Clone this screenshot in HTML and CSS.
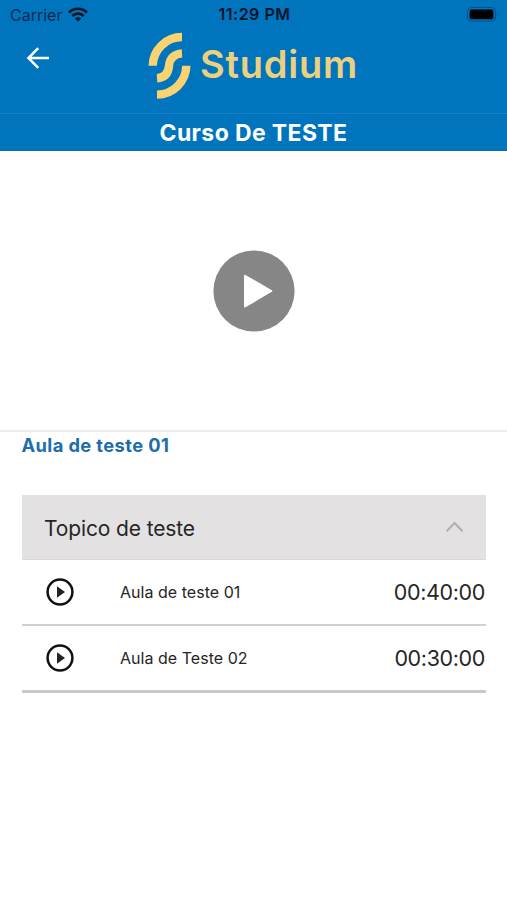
FILE: index.html
```html
<!DOCTYPE html>
<html lang="pt-BR">
<head>
<meta charset="utf-8">
<title>Studium</title>
<link rel="stylesheet" href="styles.css">
</head>
<body>
<header class="header">
  <div class="status">
    <div class="status-left"><span class="carrier">Carrier</span>
      <svg class="wifi" width="20" height="15" viewBox="0 0 20 15"><g fill="none" stroke="#03152b" stroke-width="2.7"><path d="M1 5.5a12.7 12.7 0 0 1 18 0"/><path d="M4.3 9a8.1 8.1 0 0 1 11.4 0"/></g><path d="M6.9 11.6a4.6 4.6 0 0 1 6.2 0L10 14.6z" fill="#03152b"/></svg>
    </div>
    <span class="time">11:29 PM</span>
    <svg class="battery" width="33" height="15" viewBox="0 0 33 15"><rect x=".5" y=".5" width="28" height="13.6" rx="4" fill="none" stroke="#07518a"/><rect x="2.6" y="2.6" width="23.8" height="9.6" rx="2" fill="#000"/><path d="M30.3 5q1.7 2.4 0 4.8z" fill="#07518a"/></svg>
  </div>
  <div class="brand-row">
    <svg class="back" width="24" height="24" viewBox="0 0 24 24" fill="none" stroke="#fff" stroke-width="2.5"><path d="M23 12H3M12.2 2.1L2.4 12l9.8 9.9"/></svg>
    <svg class="logo" width="43" height="67" viewBox="0 0 43 67" fill="none" stroke="#f9d271" stroke-width="8.4"><path d="M4.7 33.8A29.3 29.3 0 0 1 34 5M9 46.2c7.5-.5 11.3-4.7 12-12.4S26.5 21.9 34 21.4M38.3 33.8A29.3 29.3 0 0 1 9 62.6"/></svg>
    <span class="brand">Studium</span>
  </div>
  <h1 class="course"><span>Curso De TESTE</span></h1>
</header>
<main>
  <section class="video">
    <svg width="82" height="82" viewBox="0 0 82 82"><circle cx="41" cy="41" r="40.6" fill="#868686"/><path d="M32 25.8L58.3 41 32 56.5z" fill="#fff" stroke="#fff" stroke-width="2" stroke-linejoin="round"/></svg>
  </section>
  <h2 class="lesson"><span>Aula de teste 01</span></h2>
  <section class="topics">
    <div class="topic"><span class="topic-name">Topico de teste</span>
      <svg width="18" height="12" viewBox="0 0 18 12" fill="none" stroke="#b0afb0" stroke-width="2"><path d="M.5 10.3L8.5 2l8 8.3"/></svg>
    </div>
    <div class="row">
      <svg class="play" width="28" height="28" viewBox="0 0 28 28"><circle cx="14" cy="14" r="12.4" fill="none" stroke="#111" stroke-width="2.5"/><path d="M11 8.3v11.4l8-5.7z" fill="#222"/></svg>
      <span class="name">Aula de teste 01</span><span class="duration">00:40:00</span>
    </div>
    <div class="row row-last">
      <svg class="play" width="28" height="28" viewBox="0 0 28 28"><circle cx="14" cy="14" r="12.4" fill="none" stroke="#111" stroke-width="2.5"/><path d="M11 8.3v11.4l8-5.7z" fill="#222"/></svg>
      <span class="name">Aula de Teste 02</span><span class="duration">00:30:00</span>
    </div>
  </section>
</main>
</body>
</html>
```
FILE: styles.css
```css
* { box-sizing: border-box; }
body { margin: 0; background: #fff; color: #262626; font-family: Inter, sans-serif; }
svg { display: block; flex: none; }
.header { height: 151px; background: #0074bc; }
.status { height: 29px; display: grid; grid-template-columns: 1fr auto 1fr; align-items: center; padding: 0 8px 0 10px; color: #03152b; font-size: 16px; line-height: 28px; white-space: nowrap; }
.status-left { display: flex; align-items: center; gap: 6px; height: 28px; }
.carrier { color: #0a2c50; }
.time { font-weight: 600; font-size: 16px; letter-spacing: 0.5px; height: 29px; line-height: 28px; }
.battery { justify-self: end; margin: -1px -1px 0 0; }
.brand-row { height: 84px; display: flex; align-items: flex-start; padding-left: 26px; }
.back { margin-top: 17px; }
.logo { margin: 3px 0 0 98px; }
.brand { margin: 11px 0 0 9px; color: #ebd17f; font-size: 38px; line-height: 48px; font-weight: 600; letter-spacing: 0.8px; }
.course { height: 38px; margin: 0; border-top: 1px solid #1b80c3; text-align: center; color: #fff; font-size: 23px; line-height: 38px; font-weight: 700; letter-spacing: 0.38px; }
.video { height: 281px; display: flex; align-items: center; justify-content: center; border-bottom: 2px solid #ebebeb; }
.lesson { height: 63px; margin: 0; padding-left: 21.5px; color: #1d6dac; font-size: 18.3px; line-height: 26px; font-weight: 700; letter-spacing: 0.4px; }
.topics { margin: 0 21px 0 22px; }
.topic { height: 65px; display: flex; align-items: center; justify-content: space-between; padding: 0 22px; background: #e3e1e2; border-bottom: 1px solid #d9d7d8; font-size: 21px; }
.topic-name { padding-top: 2px; letter-spacing: -0.13px; }
.row { height: 66px; display: flex; align-items: center; padding-left: 24px; border-bottom: 2px solid #d0d0d0; }
.row-last { height: 67px; border-bottom: 3px solid #c8c8c8; }
.name { margin-left: 46px; font-size: 16px; letter-spacing: 0.03px; }
.duration { margin-left: auto; padding-right: 1px; font-size: 21.5px; letter-spacing: -0.36px; }
```
